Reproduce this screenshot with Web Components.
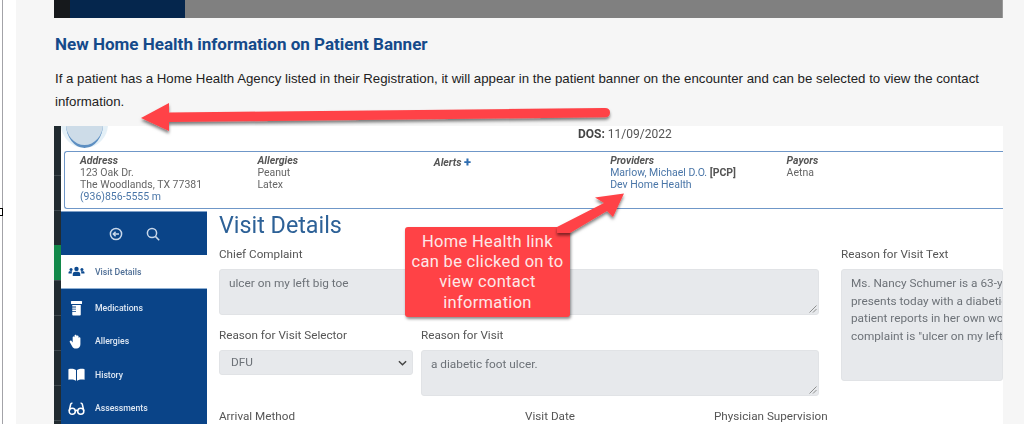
<!DOCTYPE html>
<html>
<head>
<meta charset="utf-8">
<title>Home Health</title>
<style>
  html, body { margin: 0; height: 100%; overflow: hidden; background: #f6f6f6; }
</style>
</head>
<body>
<doc-page>
  <hero-bar></hero-bar>
  <h2 slot="title">New Home Health information on Patient Banner</h2>
  <p slot="text">If a patient has a Home Health Agency listed in their Registration, it will appear in the patient banner on the encounter and can be selected to view the contact information.</p>
  <ehr-shot slot="shot">
    <patient-banner slot="banner"></patient-banner>
    <ehr-nav slot="nav">
      <nav-item active label="Visit Details" icon="users"></nav-item>
      <nav-item label="Medications" icon="bottle"></nav-item>
      <nav-item label="Allergies" icon="hand"></nav-item>
      <nav-item label="History" icon="book"></nav-item>
      <nav-item label="Assessments" icon="glasses"></nav-item>
    </ehr-nav>
    <visit-form slot="main"></visit-form>
  </ehr-shot>
  <call-out slot="over">Home Health link can be clicked on to view contact information</call-out>
  <red-arrows slot="over"></red-arrows>
</doc-page>

<script>
// Halaman utama: gutter kiri + kolom konten
class DocPage extends HTMLElement {
  constructor() {
    super();
    this.attachShadow({ mode: "open" });
  }
  connectedCallback() {
    this.shadowRoot.innerHTML = `
      <style>
        :host { display: flex; width: 1024px; height: 424px; overflow: hidden; position: relative; background: #f6f6f6; }
        .gutter { width: 16px; flex: none; background: linear-gradient(90deg, #fff 2px, #a3a3a8 2px, #a3a3a8 3px, #fff 3px); }
        .mark { position: absolute; left: 0; top: 208px; width: 3px; height: 8px; box-sizing: border-box; border: 1px solid #000; border-left: 0; background: #fff; }
        .content { width: 949px; margin-left: 38px; flex: none; display: flex; flex-direction: column; }
        ::slotted(h2) { margin: 16px 0 0 1px; font: 700 17.05px/20px Roboto, sans-serif; color: #154a8a; }
        ::slotted(p) { margin: 13px 0 0 1px; font: 13.28px/23px "Liberation Sans", Arial, sans-serif; color: #222; }
      </style>
      <div class="gutter"></div>
      <div class="mark"></div>
      <div class="content">
        <slot></slot>
        <slot name="title"></slot>
        <slot name="text"></slot>
        <slot name="shot"></slot>
      </div>
      <slot name="over"></slot>
    `;
  }
}

class HeroBar extends HTMLElement {
  constructor() {
    super();
    this.attachShadow({ mode: "open" });
  }
  connectedCallback() {
    this.shadowRoot.innerHTML = `
      <style>
        :host { display: flex; height: 18px; flex: none; }
        .a { width: 16px; background: #16191c; }
        .b { width: 115px; background: #05264d; }
        .c { flex: 1; background: #808080; border-right: 1px solid #9a9a9a; }
      </style>
      <div class="a"></div><div class="b"></div><div class="c"></div>
    `;
  }
}

// Screenshot EHR di dalam artikel
class EhrShot extends HTMLElement {
  constructor() {
    super();
    this.attachShadow({ mode: "open" });
  }
  connectedCallback() {
    this.shadowRoot.innerHTML = `
      <style>
        :host { display: flex; margin-top: 13px; height: 298px; flex: none; background: #fff; overflow: hidden; filter: blur(0.4px); }
        .strip { width: 7px; flex: none; background: repeating-linear-gradient(180deg, #212b30 0, #212b30 34px, #3f494e 34px, #3f494e 35px) 0 15px; position: relative; }
        .green { position: absolute; left: 0; top: 119px; width: 7px; height: 35px; background: #12894a; }
        .body { flex: 1; min-width: 0; display: flex; flex-direction: column; }
        .top { height: 25px; flex: none; position: relative; display: flex; font: 12px/17px Roboto, sans-serif; color: #555; }
        .top .dos { margin-left: 517px; }
        .top b { color: #444; }
        .avatar { position: absolute; left: 0; top: -26px; width: 47px; height: 48px; border-radius: 50%; overflow: hidden; background: #e4f0f7; }
        .avatar::before { content: ""; position: absolute; left: 5px; right: 5px; top: 0; bottom: 0; border-radius: 50%; background: #cddce8; border-bottom: 3px solid #5d8fc2; box-sizing: border-box; }
        .row { flex: 1; display: flex; min-height: 0; margin-top: 2px; }
      </style>
      <div class="strip"><div class="green"></div></div>
      <div class="body">
        <div class="top">
          <div class="avatar"></div>
          <div class="dos"><b>DOS:</b> 11/09/2022</div>
        </div>
        <slot name="banner"></slot>
        <div class="row">
          <slot name="nav"></slot>
          <slot name="main"></slot>
        </div>
      </div>
    `;
  }
}

class PatientBanner extends HTMLElement {
  constructor() {
    super();
    this.attachShadow({ mode: "open" });
  }
  connectedCallback() {
    this.shadowRoot.innerHTML = `
      <style>
        :host { display: grid; grid-template-columns: 177.4px repeat(4, 176.4px); height: 58px; box-sizing: border-box; margin-left: 3px; padding: 2.5px 0 0 15px; border: 1px solid #6f97c8; border-right: 0; border-radius: 3px 0 0 3px; font: 10.5px/12.3px Roboto, sans-serif; color: #666; flex: none; }
        b { display: block; font-style: italic; font-weight: 700; color: #555; }
        a { color: #4a76a8; text-decoration: none; display: block; }
        .alerts { padding-top: 2px; }
        .plus { color: #2f6db0; font-style: normal; font-weight: 900; font-size: 13px; line-height: 10px; }
      </style>
      <div><b>Address</b>123 Oak Dr.<br>The Woodlands, TX 77381<br><a>(936)856-5555 m</a></div>
      <div><b>Allergies</b>Peanut<br>Latex</div>
      <div class="alerts"><b>Alerts <span class="plus">+</span></b></div>
      <div><b>Providers</b><a>Marlow, Michael D.O. <b style="display:inline;font-style:normal;color:#555">[PCP]</b></a><a>Dev Home Health</a></div>
      <div><b>Payors</b>Aetna</div>
    `;
  }
}

class EhrNav extends HTMLElement {
  constructor() {
    super();
    this.attachShadow({ mode: "open" });
  }
  connectedCallback() {
    this.shadowRoot.innerHTML = `
      <style>
        :host { display: flex; flex-direction: column; width: 146px; flex: none; background: #0a4488; border-top: 1px solid #7fa0c8; }
        .tools { height: 43px; flex: none; display: flex; align-items: center; justify-content: center; gap: 21px; padding-left: 1px; }
        svg { width: 16px; height: 16px; fill: none; stroke: #c9d8ea; stroke-width: 1.5; }
      </style>
      <div class="tools">
        <svg viewBox="0 0 16 16"><circle cx="8" cy="8" r="5.6"/><path d="M11 8H5.4M7.6 5.7 5.3 8l2.3 2.3"/></svg>
        <svg viewBox="0 0 16 16"><circle cx="7" cy="7" r="4.6"/><path d="m10.4 10.4 3.8 3.8"/></svg>
      </div>
      <slot></slot>
    `;
  }
}

const NAV_ICONS = {
  users: `<circle cx="10" cy="4.5" r="2.6"/><circle cx="3.6" cy="5.2" r="1.8"/><circle cx="16.4" cy="5.2" r="1.8"/><path d="M5.6 13V10.6C5.6 8.8 7 7.8 8.4 7.8h3.2c1.4 0 2.8 1 2.8 2.8V13z"/><path d="M0.6 10V8.8C0.6 7.8 1.4 7.4 2.2 7.4H5C4.4 8.2 4.4 9.2 4.4 10zM19.4 10V8.8c0-1-.8-1.4-1.6-1.4H15c.6.8.6 1.8.6 2.6z"/>`,
  bottle: `<rect x="3.5" y="0" width="13" height="3.6" rx=".6"/><path d="M5 4.6h10V16c0 .6-.4 1-1 1H6c-.6 0-1-.4-1-1V13h4.4v-1H5V10h4.4V9H5V7.5h4.4v-1H5z"/>`,
  hand: `<path d="M5.5 4c0-1.5 2.2-1.5 2.2 0V2c0-1.5 2.4-1.5 2.4 0v.8c0-1.4 2.3-1.3 2.3.2v1.6c0-1.3 2.2-1.2 2.2.3V12c0 3-1.8 5-4.6 5H9c-2 0-3-.8-4-2.5L2.2 9.6C1.4 8.2 3.2 7 4.2 8.2L5.5 10z"/>`,
  book: `<path d="M0.5 2.5C3.5 1.6 7 2 9.4 3.6V16C7 14.6 3.6 14.2 .5 15zM19.5 2.5C16.5 1.6 13 2 10.6 3.6V16C13 14.6 16.4 14.2 19.5 15z"/>`,
  glasses: `<g fill="none" stroke="#fff" stroke-width="1.8"><circle cx="5" cy="12" r="3.6"/><circle cx="15" cy="12" r="3.6"/><path d="M8.4 11.6c1-.8 2.2-.8 3.2 0M1.4 11.5 3.2 3.6c.2-.8 1-1.2 2-1M18.6 11.5 16.8 3.6c-.2-.8-1-1.2-2-1"/></g>`,
};

class NavItem extends HTMLElement {
  constructor() {
    super();
    this.attachShadow({ mode: "open" });
  }
  connectedCallback() {
    const icon = NAV_ICONS[this.getAttribute("icon")];
    this.shadowRoot.innerHTML = `
      <style>
        :host { display: flex; align-items: center; box-sizing: border-box; height: 33.3px; flex: none; padding: 3px 0 0 7px; font: 500 8.7px/12px Roboto, sans-serif; color: #dfe8f3; }
        :host([active]) { background: #fff; color: #4f6f96; height: 34px; padding-top: 1px; margin-bottom: 1px; border-bottom: 1px solid #8fb0d4; }
        svg { width: 17px; height: 15px; fill: #fff; flex: none; margin-right: 10px; }
        :host([active]) svg { fill: #0d4a8f; }
      </style>
      <svg viewBox="0 0 20 17.5">${icon}</svg><span>${this.getAttribute("label")}</span>
    `;
  }
}

class FormField extends HTMLElement {
  constructor() {
    super();
    this.attachShadow({ mode: "open" });
  }
  connectedCallback() {
    this.shadowRoot.innerHTML = `
      <style>
        :host { display: block; font: 11.7px/15px Roboto, sans-serif; color: #555; min-width: 0; }
        .label { height: 15px; margin-bottom: 7px; white-space: nowrap; }
      </style>
      <div class="label">${this.getAttribute("label")}</div>
      <slot></slot>
    `;
  }
}

class FieldBox extends HTMLElement {
  constructor() {
    super();
    this.attachShadow({ mode: "open" });
  }
  connectedCallback() {
    const grip = this.hasAttribute("grip")
      ? `<svg class="grip" viewBox="0 0 8 8"><path d="M0.5 7.5 7.5 .5M4 7.5 7.5 4"/></svg>` : "";
    const caret = this.hasAttribute("caret")
      ? `<svg class="caret" viewBox="0 0 10 6"><path d="M1 1 5 5 9 1"/></svg>` : "";
    this.shadowRoot.innerHTML = `
      <style>
        :host { display: block; position: relative; box-sizing: border-box; background: #e7e9ec; border: 1px solid #e1e3e6; border-radius: 3px; padding: 5px 9px; font: 11.8px/17.6px Roboto, sans-serif; color: #6d7278; white-space: nowrap; overflow: hidden; }
        :host([caret]) { padding: 3px 11px; height: 25px; }
        .grip { position: absolute; right: 1px; bottom: 1px; width: 8px; height: 8px; fill: none; stroke: #777; stroke-width: .8; }
        .caret { position: absolute; right: 5px; top: 9px; width: 9px; height: 6px; fill: none; stroke: #444; stroke-width: 1.6; }
      </style>
      <slot></slot>${grip}${caret}
    `;
  }
}

class VisitForm extends HTMLElement {
  constructor() {
    super();
    this.attachShadow({ mode: "open" });
  }
  connectedCallback() {
    this.shadowRoot.innerHTML = `
      <style>
        :host { display: block; flex: 1; min-width: 0; padding-left: 12px; overflow: hidden; }
        h1 { margin: 0; font: 400 23.3px/29px Roboto, sans-serif; color: #2d6197; }
        .cols { display: grid; grid-template-columns: 600px 162px; column-gap: 22px; margin-top: 7px; }
        .left { display: grid; grid-template-columns: 194px 398px; column-gap: 8px; row-gap: 13px; }
        .wide { grid-column: 1 / 3; }
        .tall { height: 46px; }
        .text { height: 112px; }
        .bottom { display: grid; grid-template-columns: 306px 189px 200px; margin-top: 13px; font: 11.7px/15px Roboto, sans-serif; color: #555; }
      </style>
      <h1>Visit Details</h1>
      <div class="cols">
        <div class="left">
          <form-field class="wide" label="Chief Complaint"><field-box class="tall" grip>ulcer on my left big toe</field-box></form-field>
          <form-field label="Reason for Visit Selector"><field-box caret>DFU</field-box></form-field>
          <form-field label="Reason for Visit"><field-box class="tall" grip>a diabetic foot ulcer.</field-box></form-field>
        </div>
        <form-field label="Reason for Visit Text"><field-box class="text">Ms. Nancy Schumer is a 63-year-old<br>presents today with a diabetic foot<br>patient reports in her own words<br>complaint is "ulcer on my left big toe"</field-box></form-field>
      </div>
      <div class="bottom"><span>Arrival Method</span><span>Visit Date</span><span>Physician Supervision</span></div>
    `;
  }
}

// Kotak keterangan merah di atas screenshot
class CallOut extends HTMLElement {
  constructor() {
    super();
    this.attachShadow({ mode: "open" });
  }
  connectedCallback() {
    this.shadowRoot.innerHTML = `
      <style>
        :host { position: absolute; left: 405px; top: 227px; width: 165px; height: 90px; box-sizing: border-box; padding: 5px 3px 0; background: #ff4246; border-radius: 3px; box-shadow: 1px 2px 3px rgba(0,0,0,.45); color: #fde8e8; font: 16.5px/20.2px Roboto, sans-serif; letter-spacing: .3px; text-align: center; z-index: 2; }
      </style>
      <slot></slot>
    `;
  }
}

class RedArrows extends HTMLElement {
  constructor() {
    super();
    this.attachShadow({ mode: "open" });
  }
  connectedCallback() {
    this.shadowRoot.innerHTML = `
      <style>
        :host { position: absolute; left: 0; top: 0; width: 1024px; height: 424px; pointer-events: none; z-index: 3; }
        svg { display: block; }
      </style>
      <svg width="1024" height="424" viewBox="0 0 1024 424">
        <defs><filter id="s" x="-5%" y="-30%" width="110%" height="170%"><feDropShadow dx="0" dy="2.5" stdDeviation="1.5" flood-color="#000" flood-opacity=".5"/></filter></defs>
        <path filter="url(#s)" fill="#ff4246" d="M141 118 169 103V112.5L605 108Q610 108 610 112.5Q610 117 605 117.3L169 122V131Z"/>
        <path filter="url(#s)" fill="#ff4246" d="M624 193.5 613 217 607 211 570 233H557V227L604 203 595 197.5Z"/>
      </svg>
    `;
  }
}

customElements.define("doc-page", DocPage);
customElements.define("hero-bar", HeroBar);
customElements.define("ehr-shot", EhrShot);
customElements.define("patient-banner", PatientBanner);
customElements.define("ehr-nav", EhrNav);
customElements.define("nav-item", NavItem);
customElements.define("form-field", FormField);
customElements.define("field-box", FieldBox);
customElements.define("visit-form", VisitForm);
customElements.define("call-out", CallOut);
customElements.define("red-arrows", RedArrows);
</script>
</body>
</html>
